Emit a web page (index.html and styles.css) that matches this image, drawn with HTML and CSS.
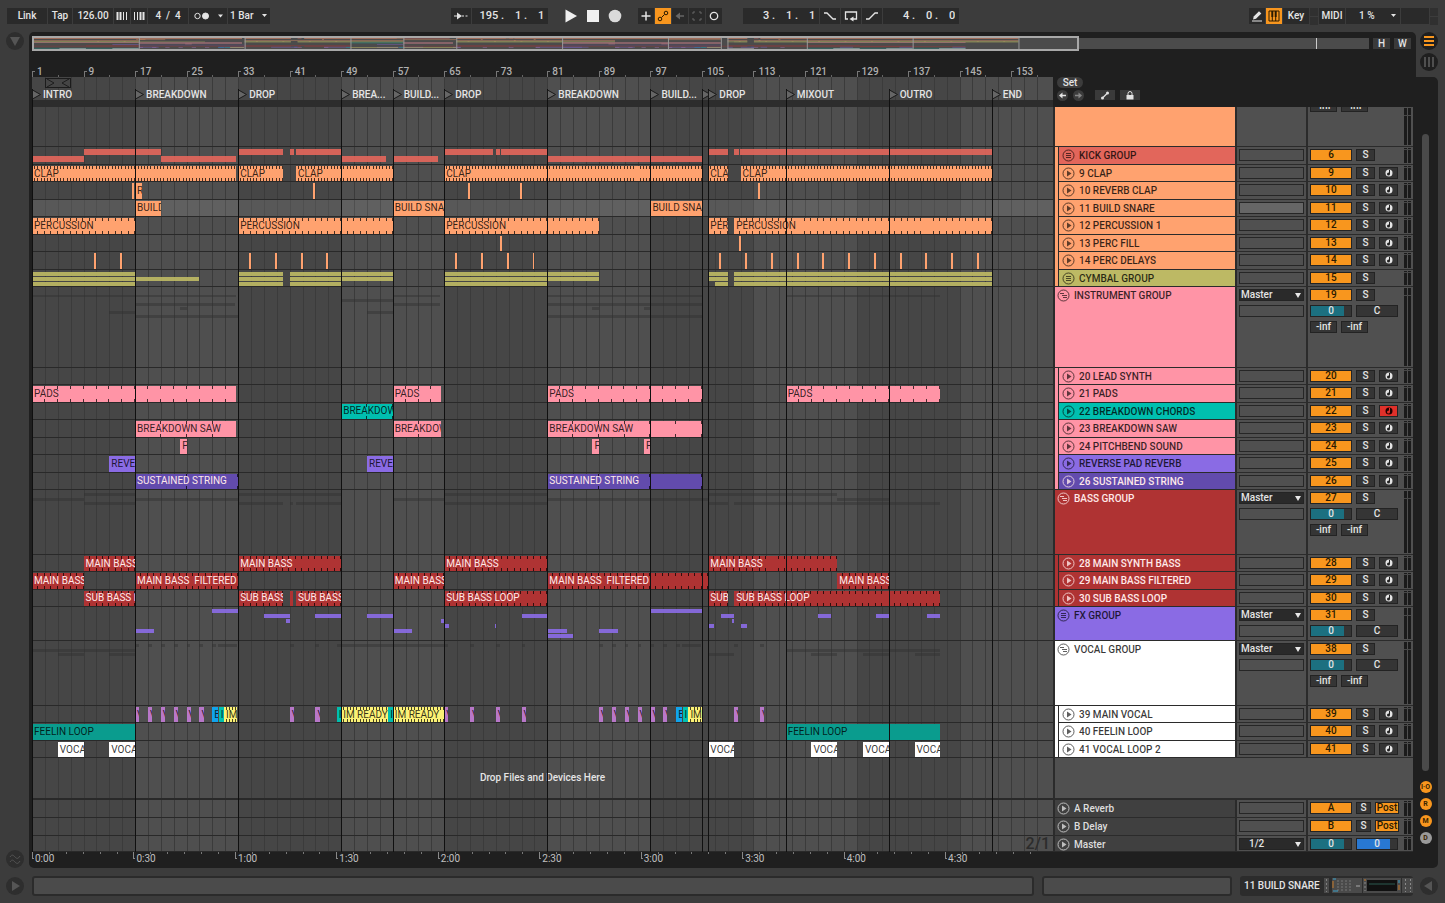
FILE: index.html
```html
<!DOCTYPE html>
<html lang="en">
<head>
<meta charset="utf-8">
<meta name="viewport" content="width=device-width, initial-scale=1">
<title>Arrangement</title>
<link rel="stylesheet" href="styles.css">
</head>
<body>
<header class="toolbar">
  <div class="tools">
    <button class="tool w40">Link</button>
    <button class="tool w24">Tap</button>
    <input class="tool w40" aria-label="Tempo" value="126.00">
    <button class="tool w16" aria-label="Nudge down"><svg width="12" height="10"><path d="M1.500 1v8M4.500 1v8" stroke-width="2"/><path d="M7.500 1v8M10.500 1v8"/></svg></button>
    <button class="tool w16" aria-label="Nudge up"><svg width="12" height="10"><path d="M1.500 1v8M4.500 1v8"/><path d="M7.500 1v8M10.500 1v8" stroke-width="2"/></svg></button>
    <input class="tool w40" aria-label="Time signature" value="4  /  4">
    <button class="tool w38" aria-label="Metronome"><svg width="30" height="10"><circle cx="4.500" cy="5" r="2.700"/><circle class="fill" cx="12.500" cy="5" r="3"/><path class="fill none" d="M25 3.500h5l-2.500 3z"/></svg></button>
    <button class="tool w42">1 Bar <svg class="caret" width="6" height="4"><path class="fill none" d="M0 0h5L2.500 3z"/></svg></button>
  </div>
  <div class="spring-a"></div>
  <div class="tools">
    <button class="tool w20" aria-label="Follow"><svg width="16" height="10"><path d="M1 5h3"/><path class="fill none" d="M4 1.500 9 5l-5 3.500z"/><path d="M9 5h6" stroke-dasharray="2 1.500"/></svg></button>
    <input class="tool w76 pos" aria-label="Position" value="195 .    1 .    1">
    <div class="transport">
      <button class="plain" aria-label="Play"><svg width="14" height="14"><path class="fill none" d="M1.500 .5v13L13 7z"/></svg></button>
      <button class="plain" aria-label="Stop"><svg width="14" height="14"><path class="fill none" d="M1 1h12v12H1z"/></svg></button>
      <button class="plain" aria-label="Record"><svg width="14" height="14"><circle class="fill none dim" cx="7" cy="7" r="6.300"/></svg></button>
    </div>
    <button class="tool w16" aria-label="Overdub"><svg width="10" height="10"><path d="M5 .5v9M.5 5h9" stroke-width="1.500"/></svg></button>
    <button class="tool w16 on" aria-label="Automation arm"><svg width="12" height="12"><circle cx="3" cy="9" r="1.800"/><circle cx="9" cy="3" r="1.800"/><path d="M4.500 7.500 7.500 4.500"/></svg></button>
    <button class="tool w16 off" aria-label="Re-enable automation"><svg width="10" height="10"><path d="M2 5h7" stroke-width="1.500"/><path class="fill none" d="M5 1.500v7L.5 5z"/></svg></button>
    <button class="tool w16 off" aria-label="Capture"><svg width="10" height="10"><path d="M1 3V1h2M7 1h2v2M9 7v2H7M3 9H1V7"/></svg></button>
    <button class="tool w16" aria-label="Session record"><svg width="10" height="10"><circle cx="5" cy="5" r="3.700" stroke-width="1.300"/></svg></button>
    <input class="tool w76 pos gap-left" aria-label="Loop start" value="3 .    1 .    1">
    <button class="tool w20" aria-label="Punch in"><svg width="14" height="10"><path d="M1 2h3l6 6h3" stroke-width="1.300"/></svg></button>
    <button class="tool w20" aria-label="Loop"><svg width="14" height="12"><path d="M4 9H1.500V2h11v7H9" stroke-width="1.300"/><path class="fill none" d="M9.500 6.500v5L5.500 9z"/></svg></button>
    <button class="tool w20" aria-label="Punch out"><svg width="14" height="10"><path d="M1 8h3l6-6h3" stroke-width="1.300"/></svg></button>
    <input class="tool w76 pos" aria-label="Loop length" value="4 .    0 .    0">
  </div>
  <div class="spring-b"></div>
  <div class="tools">
    <button class="tool w16" aria-label="Draw mode"><svg width="12" height="12"><path class="fill none" d="M2 9.500 2.700 6.500 8 1.200l2.300 2.300L5 8.800z"/><path d="M1 11h10"/></svg></button>
    <button class="tool w16 on" aria-label="Computer keyboard"><svg width="12" height="12"><path d="M1 1h10v10H1zM4.300 7v4M7.700 7v4"/><path d="M4.300 1v6M7.700 1v6" stroke-width="2"/></svg></button>
    <button class="tool w26">Key</button>
    <span class="lamps"><i></i><i></i></span>
    <button class="tool w26">MIDI</button>
    <button class="tool w54 cpu">1 % <svg class="caret" width="6" height="4"><path class="fill none" d="M0 0h5L2.500 3z"/></svg></button>
    <span class="tool w28"></span>
    <span class="lamps"><i></i><i></i></span>
  </div>
</header>

<main class="main">
  <aside class="rail">
    <button class="round" aria-label="Browser"><svg width="18" height="18"><path class="fill none" d="M4 5h10L9 14z"/></svg></button>
    <button class="round" aria-label="Groove pool"><svg width="18" height="18"><path d="M4 7c2-3 3-2 5 0s3 2 5-1M4 12c2-3 3-2 5 0s3 2 5-1"/></svg></button>
  </aside>
  <section class="panel">
    <div class="panel-top">
      <div class="top-left">
        <div class="overview">
          <div class="map" id="map"><span class="map-view"></span><span class="map-mark"></span></div>
          <button class="hw">H</button><button class="hw">W</button>
        </div>
        <div class="ruler" id="ruler"></div>
      </div>
      <div class="views">
        <button class="round dark lit" aria-label="Arrangement view"><svg width="18" height="18"><path d="M4 5h10M4 9h10M4 13h10" stroke-width="2"/></svg></button>
        <button class="round dark" aria-label="Session view"><svg width="18" height="18"><path d="M5 4v10M9 4v10M13 4v10" stroke-width="1.500"/></svg></button>
      </div>
    </div>
    <div class="panel-body">
      <div class="arrange">
        <div class="grid-layer" id="grid"></div>
        <div class="arr-head">
          <div class="arr-locs"><div class="scrub"></div></div>
          <div class="arr-set">
            <button class="set">Set</button>
            <div class="set-row">
              <button class="dot" aria-label="Previous locator"><svg width="11" height="11"><path d="M4 5.500h5" stroke-width="1.500"/><path class="fill none" d="M5.500 2.500v6L2 5.500z"/></svg></button>
              <button class="dot dimmed" aria-label="Next locator"><svg width="11" height="11"><path d="M2 5.500h5" stroke-width="1.500"/><path class="fill none" d="M5.500 2.500v6L9 5.500z"/></svg></button>
              <button class="mini first" aria-label="Automation mode"><svg width="10" height="9"><path d="M3 6.500 7 2.500" stroke-width="1.200"/><circle class="fill none" cx="2.500" cy="7" r="1.500"/><circle class="fill none" cx="7.500" cy="2" r="1.500"/></svg></button>
              <button class="mini" aria-label="Lock envelopes"><svg width="10" height="9"><path class="fill none" d="M1.500 4h7v4.500h-7z"/><path d="M3 4V2.500a2 2 0 0 1 4 0V4"/></svg></button>
            </div>
          </div>
        </div>
        <div class="tracks" id="tracks"></div>
        <div class="loc-layer" id="locs"></div>
        <div class="zoom-label">2/1</div>
      </div>
      <div class="side">
        <div class="scrollbar"></div>
        <button class="chip">I·O</button><button class="chip">R</button><button class="chip">M</button><button class="chip gray">D</button>
      </div>
    </div>
    <div class="times" id="times"></div>
  </section>
</main>

<footer class="footer">
  <button class="round" aria-label="Show detail"><svg width="18" height="18"><path class="fill none" d="M6 4v10l8-5z"/></svg></button>
  <div class="status grow"></div>
  <div class="status second"></div>
  <div class="device">
    <span>11 BUILD SNARE</span>
    <svg width="92" height="15">
      <g class="none"><path fill="#4a4a4a" d="M1 0h5v15H1zM9 0h30v15H9zM40 0h38v15H40zM79 0h12v15H79z"/>
      <path fill="#111" d="M44 2h30v11H44z"/></g>
      <path d="M3.500 1v13" stroke="#808080" stroke-dasharray="2 2"/>
      <path d="M14 3h16M14 6h16M14 9h16M14 12h16" stroke="#777" stroke-dasharray="2 2"/>
      <path d="M10 1h3M10 13h5M76 2v3" stroke="#3aa0c8"/><path d="M10 3v7M76 7v5M42 1v2" stroke="#c87a28"/>
      <path d="M33 8h4" stroke="#aaa"/><path d="M42 4v9M82.500 1v13M87.500 1v13" stroke="#8a8a8a" stroke-dasharray="2 2"/>
      <path d="M46 6h26" stroke="#2c5a50"/>
    </svg>
  </div>
  <button class="round" aria-label="Hide device"><svg width="18" height="18"><path class="fill none" d="M12 4v10L4 9z"/></svg></button>
</footer>
<script src="app.js"></script>
</body>
</html>
```
FILE: styles.css
```css
* { box-sizing: border-box; }
:root {
  --bg: #3c3c3c; --dark: #1f1f1f; --ctl: #2a2a2a; --line: #2b2b2b;
  --cell: #505050; --orange: #f8961e; --text: #e4e4e4; --head: 360px;
}
body {
  margin: 0; height: 100vh; min-height: 640px; display: flex; flex-direction: column;
  background: var(--bg); color: var(--text);
  font: 500 10px/12px Roboto, "Liberation Sans", sans-serif; overflow: hidden;
}
button, input, select { font: inherit; color: inherit; border: 0; padding: 0; margin: 0; border-radius: 0; background: none; }
svg { display: block; fill: none; stroke: currentColor; }
svg .fill { fill: currentColor; }
svg .none { stroke: none; }

/* toolbar */
.toolbar { display: flex; align-items: center; height: 32px; padding: 0 7px; flex: none; }
.tools { display: flex; gap: 1px; align-items: center; }
.spring-a { flex: 5; }
.spring-b { flex: 8; }
.tool { height: 16px; background: var(--ctl); text-align: center; display: flex; align-items: center; justify-content: center; line-height: 16px; white-space: pre; min-width: 0; }
.pos { text-align: right; padding-right: 4px; font-size: 11px; }
.tool.on { background: var(--orange); color: #2a1a00; }
.tool.off { color: #666; }
.w16 { width: 16px; } .w20 { width: 20px; } .w24 { width: 24px; } .w26 { width: 26px; } .w28 { width: 28px; }
.w38 { width: 38px; } .w40 { width: 40px; } .w42 { width: 42px; } .w54 { width: 54px; } .w76 { width: 76px; }
.caret { margin-left: 6px; }
.cpu .caret { margin-left: 14px; }
.cpu { padding-left: 10px; }
.transport { display: flex; gap: 8px; padding: 0 15px; }
.plain { color: #f0f0f0; }
.dim { opacity: .88; }
.gap-left { margin-left: 20px; }
.lamps { display: flex; flex-direction: column; gap: 1px; width: 8px; }
.lamps i { height: 8px; background: #303030; }

/* frame */
.main { flex: 1; display: flex; min-height: 0; padding-right: 7px; }
.rail { width: 29px; flex: none; display: flex; flex-direction: column; justify-content: space-between; align-items: center; }
.round { width: 18px; height: 18px; border-radius: 50%; background: #2e2e2e; color: #555; flex: none; }
.round.dark { background: var(--dark); color: #606060; }
.round.lit { color: var(--orange); }
.panel { flex: 1; min-width: 0; display: flex; flex-direction: column; }
.panel-top { display: flex; flex: none; }
.top-left { flex: 1; background: var(--dark); border-radius: 5px 5px 0 0; padding: 4px 5px 0 4px; }
.views { width: 22px; display: flex; flex-direction: column; align-items: flex-end; gap: 3px; }
.overview { display: flex; align-items: center; gap: 4px; height: 15px; }
.map { position: relative; flex: 1; height: 11px; background: #4b4b4b; }
.map svg { width: 100%; height: 11px; opacity: .7; stroke: none; }
.map-view { position: absolute; left: -1px; top: -2px; bottom: -2px; width: 78.400%; border: 2px solid #a8a8a8; }
.map-mark { position: absolute; left: 96%; top: 0; bottom: 0; width: 1px; background: #ccc; }
.hw { width: 17px; height: 11px; background: #3a3a3a; line-height: 11px; }
.ruler { position: relative; height: 26px; margin: 0 358px 0 -1px; }
.ruler span { position: absolute; bottom: 0; height: 6px; border-left: 1px solid #777; border-top: 1px solid #777; width: 3px; color: #b0b0b0; }
.ruler span b { position: absolute; left: 4px; top: -6px; font-weight: 500; }
.ruler i { position: absolute; bottom: 0; width: 1px; height: 2px; background: #666; }
.panel-body { flex: 1; min-height: 0; display: flex; background: var(--dark); padding-left: 3px; border-top-right-radius: 5px; }
.arrange { position: relative; flex: 1; min-width: 0; display: flex; flex-direction: column; }

/* timeline backdrop and locators */
.grid-layer, .loc-layer { position: absolute; inset: 0 var(--head) 0 0; overflow: hidden; pointer-events: none; }
.grid-layer { background: #4f4f4f; }
.grid-layer b { position: absolute; top: 0; bottom: 0; background: #464646; }
.grid-layer i { position: absolute; top: 0; bottom: 0; width: 1px; background: #3b3b3b; }
.loc { position: absolute; top: 12px; bottom: 0; border-left: 1px solid #101010; white-space: nowrap; }
.loc svg { position: absolute; left: -1px; top: 0; }
.loc span { padding-left: 10px; line-height: 11px; display: block; }
.brace { position: absolute; top: 1px; height: 10px; border: 1px solid #1c1c1c; color: #1c1c1c; background: #454545; display: flex; justify-content: space-between; }
.arr-head { position: relative; flex: none; display: flex; height: 30px; }
.arr-locs { flex: 1; display: flex; align-items: flex-end; }
.scrub { flex: 1; height: 7px; background: #2d2d2d; }
.arr-set { width: var(--head); background: var(--dark); padding-left: 4px; }
.set { height: 11px; width: 26px; border-radius: 6px; background: #3c3c3c; line-height: 11px; display: block; }
.set-row { display: flex; gap: 5px; align-items: center; height: 14px; }
.dot { width: 11px; height: 11px; border-radius: 50%; background: #3c3c3c; }
.dimmed { color: #888; }
.mini { width: 20px; height: 10px; background: #3a3a3a; display: flex; justify-content: center; align-items: center; }
.first { margin-left: 6px; }

/* tracks */
.tracks { position: relative; flex: 1; min-height: 0; display: flex; flex-direction: column; }
.row { display: flex; min-height: 0; flex-basis: 0; overflow: hidden; }
.lane { position: relative; flex: 1; min-width: 0; overflow: hidden; border-bottom: 1px solid #292929; }
.row.selected .lane { background: rgba(255,255,255,.1); }
.row.selected .slot { background: #666; }
.thick .lane { border-bottom-width: 2px; }
.drop { text-align: center; }
.drop .lane { display: flex; align-items: center; justify-content: center; }
.head { width: var(--head); flex: none; display: flex; border-left: 2px solid var(--line); }
.strip { width: 3px; background: var(--g); }
.strip.last { border-bottom: 1px solid var(--line); }
.name { flex: 1; display: flex; align-items: flex-start; gap: 4px; padding: 2px 0 0 2px; background: var(--c); color: rgba(0,0,0,.78); border-bottom: 1px solid var(--line); min-width: 0; line-height: 13px; white-space: nowrap; }
.child .name { border-left: 1px solid var(--line); padding-left: 3px; }
.name svg { flex: none; opacity: .8; }
.light .name, .light .clip { color: #ffe9e9; }
.ret .name { background: #404040; color: #ddd; }
.io, .mix { background: var(--cell); border-left: 2px solid var(--line); border-bottom: 1px solid var(--line); display: flex; flex-direction: column; gap: 4px; padding: 2px; overflow: hidden; }
.io { width: 71px; flex: none; }
.mix { width: 107px; flex: none; position: relative; }
.scrolled .mixline:first-child { margin-top: -41px; }
.slot { height: 12px; width: 65px; border: 1px solid #262626; flex: none; }
.route { position: relative; height: 12px; width: 65px; flex: none; }
.route select { appearance: none; width: 100%; height: 12px; background: var(--ctl); border: 1px solid #242424; padding-left: 1px; line-height: 10px; display: block; }
.route::after { content: ""; position: absolute; right: 3px; top: 4px; border: 3px solid transparent; border-top: 5px solid #e8e8e8; border-bottom: 0; pointer-events: none; }
.ret .route select { padding-left: 9px; }
.mixline { display: flex; gap: 4px; height: 12px; flex: none; }
.box { height: 12px; border: 1px solid #232323; background: #353535; line-height: 10px; text-align: center; flex: none; width: 19px; overflow: hidden; }
.act { width: 42px; background: var(--orange); color: #2a1a00; }
.vol { width: 42px; background: linear-gradient(90deg, #1c7080 83%, #353535 0); }
.cue { width: 42px; background: linear-gradient(90deg, #2878d2 83%, #353535 0); }
.pan { width: 42px; }
.inf { width: 27px; }
.arm { display: flex; align-items: center; justify-content: center; }
.armed { background: #e0302a; color: #200; }
.ret .send { width: 15px; }
.post { width: 24px; background: var(--orange); color: #2a1a00; }
.meter { position: absolute; right: 2px; top: 1px; bottom: 1px; width: 7px; border: solid #1b1b1b; border-width: 0 3px; }
.meter::before { content: ""; position: absolute; left: -3px; right: -3px; top: 1px; height: 1px; background: #484848; }
.tall .meter::before { top: 7px; }
.blank { flex: 1; background: var(--cell); border-bottom: 2px solid var(--line); }

/* clips */
.clip { position: absolute; top: 1px; bottom: 0; background-color: var(--k); color: rgba(0,0,0,.8); overflow: hidden; white-space: pre; text-indent: 2px; display: flex; align-items: center; font-weight: 400; }
.looped {
  background-image:
    repeating-linear-gradient(90deg, transparent 0 calc(var(--p) - 1px), rgba(0,0,0,.72) calc(var(--p) - 1px) var(--p)),
    repeating-linear-gradient(90deg, transparent 0 calc(var(--p) - 1px), rgba(0,0,0,.72) calc(var(--p) - 1px) var(--p));
  background-size: 100% 3px; background-position: 0 0, 0 100%; background-repeat: no-repeat;
}
.seg { position: absolute; background: var(--k); opacity: .92; }
.ghost { background: #303030; opacity: .45; }

.side { width: 25px; flex: none; display: flex; flex-direction: column; align-items: center; gap: 5px; padding: 57px 0 8px; }
.scrollbar { flex: 1; width: 7px; border-radius: 4px; background: #4a4a4a; margin-bottom: 5px; }
.chip { width: 12px; height: 12px; border-radius: 50%; background: var(--orange); color: #3a2400; font-size: 7px; line-height: 12px; font-weight: 700; flex: none; }
.gray { background: #9a9a9a; }
.zoom-label { position: absolute; right: calc(var(--head) + 3px); bottom: 1px; font-size: 16px; line-height: 15px; color: #2c2c2c; }
.times { position: relative; height: 16px; flex: none; background: var(--dark); border-radius: 0 0 5px 5px; padding-left: 3px; }
.time-scale { position: relative; height: 16px; margin-right: calc(var(--head) + 25px); overflow: hidden; }
.time-scale span { position: absolute; top: 0; height: 7px; border-left: 1px solid #888; border-bottom: 1px solid #888; width: 2px; color: #c0c0c0; }
.time-scale b { position: absolute; left: 2px; top: 1px; font-weight: 400; }
.time-scale i { position: absolute; top: 0; width: 1px; height: 2px; background: #777; }

/* footer */
.footer { height: 35px; flex: none; display: flex; align-items: center; padding: 0 7px 0 6px; }
.status { height: 20px; border: 2px solid var(--line); border-radius: 3px; background: #4b4b4b; }
.grow { flex: 1; margin-left: 8px; }
.second { width: 190px; margin: 0 8px 0 8px; }
.device { display: flex; align-items: center; gap: 3px; width: 173px; height: 20px; padding-left: 4px; border-radius: 3px; background: #2c2c2c; margin-right: 7px; white-space: nowrap; overflow: hidden; }
```
FILE: app.js
```js
const BARS = 158.5;
const MAP_BARS = 202;
const pct = (n, total = BARS) => (n / total * 100).toFixed(3) + '%';
const at = bar => pct(bar - 1);

const ORANGE = '#ffa26f', PINK = '#ff94a6', TEAL = '#00bfaf', PURPLE = '#8a6be4', DEEP = '#624bad',
  RED = '#af3333', WHITE = '#ffffff', YELLOW = '#fbf176', MAUVE = '#b877c9', BLUE = '#10a4ee', SEA = '#0a9c8e';

// Clip: [start bar, end bar, label, colour]
const named = (label, spans) => spans.map(([a, b]) => [a, b, label]);
const hits = list => list.map(a => [a, a + 0.3, '']);
const vox = list => list.map(a => [a, a + 0.65, 'V', MAUVE, 0]);
// Segments of a folded group: [top, height, [[start, end], ...]]
const dots = list => list.map(a => [a, a + 0.6]);

const cymbalTop = [[1, 17], [33, 40], [41, 57], [65, 89], [106, 109], [110, 150]];

const tracks = [
  { h: 81, c: ORANGE, kind: 'scrolled', group: 1 },
  { h: 35, c: '#e2665b', g: ORANGE, name: 'KICK GROUP', n: 6, icon: 'fold', segs: [
    [2, 6, [[9, 21], [33, 40], [41, 41.6], [42, 49], [65, 72.5], [73, 73.6], [73.8, 81], [106, 109], [110, 110.7], [110.9, 150]]],
    [9, 6, [[1, 9], [21, 32.6], [49, 56], [57, 64], [81, 105]]]] },
  { h: 35, c: ORANGE, g: ORANGE, name: '9 CLAP', n: 9, loop: 0.5, clips: named('CLAP', [[1, 32.6], [33, 40], [42, 57], [65, 105], [106, 109], [111, 150]]) },
  { h: 35, c: ORANGE, g: ORANGE, name: '10 REVERB CLAP', n: 10, clips: [...hits([16.6, 44.7, 68.7, 76.7, 113.7]), [17, 18, 'REVERB CLAP']] },
  { h: 35, c: ORANGE, g: ORANGE, name: '11 BUILD SNARE', n: 11, sel: 1, clips: named('BUILD SNARE', [[17, 21], [57, 65], [97, 105]]) },
  { h: 35, c: ORANGE, g: ORANGE, name: '12 PERCUSSION 1', n: 12, loop: 1, clips: named('PERCUSSION', [[1, 17], [33, 57], [65, 89], [106, 109], [110, 150]]) },
  { h: 35, c: ORANGE, g: ORANGE, name: '13 PERC FILL', n: 13, clips: hits([73.7, 110.7]) },
  { h: 35, c: ORANGE, g: ORANGE, name: '14 PERC DELAYS', n: 14, clips: hits([10.7, 14.7, 34.7, 38.7, 42.7, 46.7, 66.7, 70.7, 74.7, 78.7, 107.7, 111.7, 115.7, 119.7, 123.7, 127.7, 131.7, 135.7, 139.7, 143.7, 147.7]) },
  { h: 35, c: '#bdb964', g: ORANGE, name: 'CYMBAL GROUP', n: 15, icon: 'fold', last: 1, segs: [
    [2, 4, cymbalTop], [7, 4, [...cymbalTop, [17, 27]]], [12, 4, [[1, 17], [33, 40], [41, 49], [65, 81], [107, 109], [110, 150]]]] },
  { h: 162, c: PINK, group: 1, name: 'INSTRUMENT GROUP', n: 19, icon: 'open', lines: 3, ghost: [
    [8, 2, [[1, 32.6], [57, 64.4], [81, 105], [118, 142]]], [12, 3, [[49, 57]]], [16, 3, [[17, 32.5], [57, 64.4], [81, 105]]],
    [20, 3, [[24, 25], [88, 89], [96, 97]]], [24, 3, [[13, 17], [53, 57]]], [28, 3, [[17, 33], [81, 105]]]] },
  { h: 35, c: PINK, g: PINK, name: '20 LEAD SYNTH', n: 20 },
  { h: 35, c: PINK, g: PINK, name: '21 PADS', n: 21, loop: 2, clips: named('PADS', [[1, 32.6], [57, 64.5], [81, 105], [118, 142]]) },
  { h: 35, c: TEAL, g: PINK, name: '22 BREAKDOWN CHORDS', n: 22, armed: 1, loop: 4, clips: [[49, 57, 'BREAKDOWN CHORDS']] },
  { h: 35, c: PINK, g: PINK, name: '23 BREAKDOWN SAW', n: 23, loop: 4, clips: named('BREAKDOWN SAW', [[17, 32.6], [57, 64.5], [81, 105]]) },
  { h: 35, c: PINK, g: PINK, name: '24 PITCHBEND SOUND', n: 24, clips: named('PITCHBEND', [[24, 25], [88, 89], [96, 97]]) },
  { h: 35, c: PURPLE, g: PINK, name: 'REVERSE PAD REVERB', n: 25, clips: named('REVERSE PAD', [[13, 17], [53, 57]]) },
  { h: 35, c: DEEP, g: PINK, light: 1, name: '26 SUSTAINED STRING', n: 26, last: 1, loop: 8, clips: named('SUSTAINED STRING', [[17, 33], [81, 105]]) },
  { h: 130, c: RED, group: 1, light: 1, name: 'BASS GROUP', n: 27, icon: 'open', lines: 3, ghost: [
    [3, 3, [[9, 17], [33, 49], [65, 81], [106, 126]]], [8, 3, [[1, 9], [17, 33], [57, 65], [81, 106], [126, 134]]],
    [12, 3, [[9, 17], [33, 40], [41, 41.5], [42, 49], [65, 81], [106, 109], [110, 142]]]] },
  { h: 35, c: RED, g: RED, light: 1, name: '28 MAIN SYNTH BASS', n: 28, loop: 1, clips: named('MAIN BASS', [[9, 17], [33, 49], [65, 81], [106, 126]]) },
  { h: 35, c: RED, g: RED, light: 1, name: '29 MAIN BASS FILTERED', n: 29, loop: 1, clips: named('MAIN BASS  FILTERED', [[1, 9], [17, 33], [57, 65], [81, 106], [126, 134]]) },
  { h: 35, c: RED, g: RED, light: 1, name: '30 SUB BASS LOOP', n: 30, last: 1, loop: 1, clips: [...named('SUB BASS LOOP', [[9, 17], [33, 40], [42, 49], [65, 81], [106, 109], [110, 142]]), [41, 41.5, '']] },
  { h: 67, c: PURPLE, group: 1, name: 'FX GROUP', n: 31, icon: 'fold', lines: 2, segs: [
    [2, 4, [[29, 33], [97, 105]]], [7, 4, [[37, 41], [45, 49], [53, 57], [77, 81], [108, 110], [123, 125], [132, 134], [140, 142]]],
    [12, 4, [[40.5, 41], [64.5, 65], [109.6, 110]]], [17, 4, [[65, 65.7], [72.9, 73.1], [106, 106.8], [111, 112]]],
    [22, 4, [[17, 20], [57, 60], [81, 84], [89, 92]]], [27, 4, [[81, 85]]]] },
  { h: 131, c: WHITE, group: 1, name: 'VOCAL GROUP', n: 38, icon: 'open', lines: 3, ghost: [
    [3, 3, [...dots([17, 19, 21, 23, 25, 27, 29, 41, 45, 69, 73, 77, 89, 91, 93, 95, 97, 99, 101, 110, 114]), [29.9, 32.8], [48.3, 65.6], [101.9, 104.8]]],
    [8, 3, [[1, 17], [118, 142]]], [12, 3, [[5, 9], [13, 17], [106, 110], [122, 126], [130, 134], [138, 142]]]] },
  { h: 35, c: WHITE, g: WHITE, name: '39 MAIN VOCAL', n: 39, loop: 0.5, clips: [
    ...vox([17, 19, 21, 23, 25, 27, 41, 45, 65, 69, 73, 77, 89, 91, 93, 95, 97, 99, 110, 114]),
    [29, 29.9, 'E', BLUE, 0], [30, 30.8, 'I', TEAL, 0], [30.8, 32.9, 'IM READY', YELLOW],
    [48.3, 49, 'I', TEAL, 0], [49, 56.2, 'IM READY', YELLOW], [56.3, 57, 'I', TEAL, 0], [57, 65, 'IM READY', YELLOW],
    [101, 101.9, 'E', BLUE, 0], [102, 102.8, 'I', TEAL, 0], [102.9, 105, 'IM READY', YELLOW]] },
  { h: 35, c: WHITE, g: WHITE, name: '40 FEELIN LOOP', n: 40, clips: [[1, 17, 'FEELIN LOOP', SEA], [118, 142, 'FEELIN LOOP', SEA]] },
  { h: 35, c: WHITE, g: WHITE, name: '41 VOCAL LOOP 2', n: 41, last: 1, clips: named('VOCAL LOOP 2', [[5, 9], [13, 17], [106, 110], [122, 126], [130, 134], [138, 142]]) },
  { h: 84, kind: 'drop' },
  { h: 36, kind: 'ret', name: 'A Reverb', n: 'A' },
  { h: 35, kind: 'ret', name: 'B Delay', n: 'B' },
  { h: 33, kind: 'ret', name: 'Master', master: 1 }
];

const icons = {
  play: '<path class="fill none" d="M5 3.500v6L9.500 6.500z"/>',
  fold: '<path d="M4 4.500h5M4 6.500h5M4 8.500h5"/>',
  open: '<path d="M3 4.500h4M5 6.500h5M6 8.500h4"/>'
};
const icon = k => `<svg width="13" height="13"><circle cx="6.500" cy="6.500" r="5.500"/>${icons[k || 'play']}</svg>`;
const armIcon = '<svg width="8" height="8"><circle class="fill none" cx="4" cy="4" r="3.500"/><path d="M4.500 1v4" stroke="#222"/><circle cx="3.500" cy="5" r="1.500" fill="#222" stroke="none"/></svg>';
const armedIcon = armIcon.replaceAll('#222', '#e0302a');

function segHtml(list, colour, ghost) {
  return (list || []).map(([top, h, spans]) => spans.map(([a, b]) =>
    `<span class="seg${ghost ? ' ghost' : ''}" style="left:${at(a)};width:${pct(b - a)};top:${top}px;height:${h}px;--k:${colour}"></span>`).join('')).join('');
}

function clipHtml(t) {
  return (t.clips || []).map(([a, b, label, colour, noLoop]) => {
    const looped = t.loop && noLoop !== 0 && b - a > 1;
    return `<div class="clip${looped ? ' looped' : ''}" style="left:${at(a)};width:${pct(b - a)};--k:${colour || t.c};--p:${pct(t.loop || 1, b - a)}">${label}</div>`;
  }).join('');
}

function mixer(t) {
  if (t.master) return '<div class="mixline"><button class="box vol">0</button><button class="box cue">0</button></div>';
  if (t.kind === 'ret') return `<div class="mixline"><button class="box act">${t.n}</button><button class="box send">S</button><button class="box post">Post</button></div>`;
  const arm = t.icon || t.group ? '' : `<button class="box arm${t.armed ? ' armed' : ''}" aria-label="Arm">${t.armed ? armedIcon : armIcon}</button>`;
  const lines = [`<div class="mixline"><button class="box act">${t.n || 5}</button><button class="box">S</button>${arm}</div>`];
  const depth = t.kind === 'scrolled' ? 3 : t.lines || 1;
  if (depth > 1) lines.push('<div class="mixline"><button class="box vol">0</button><button class="box pan">C</button></div>');
  if (depth > 2) lines.push('<div class="mixline"><button class="box inf">-inf</button><button class="box inf">-inf</button></div>');
  return lines.join('');
}

function routing(t) {
  if (t.kind === 'scrolled') return '';
  const pick = v => `<div class="route"><select aria-label="Output"><option>${v}</option></select></div>`;
  if (t.master) return pick('1/2');
  return (t.group ? pick('Master') : '') + '<div class="slot"></div>';
}

function rowHtml(t) {
  const cls = ['row', t.kind || '', t.g ? 'child' : '', t.light ? 'light' : '', t.sel ? 'selected' : '', t.group ? 'tall' : ''].join(' ');
  const vars = `flex-grow:${t.h};--c:${t.c || '#404040'};--g:${t.g || 'none'}`;
  if (t.kind === 'drop') return `<div class="${cls} thick" style="${vars}"><div class="lane">Drop Files and Devices Here</div><div class="head"><div class="blank"></div></div></div>`;
  return `<div class="${cls}" style="${vars}">
    <div class="lane">${segHtml(t.segs, t.c)}${segHtml(t.ghost, t.c, true)}${clipHtml(t)}</div>
    <div class="head">${t.g ? `<div class="strip${t.last ? ' last' : ''}"></div>` : ''}
      <div class="name">${t.name ? icon(t.icon) + `<span>${t.name}</span>` : ''}</div>
      <div class="io">${routing(t)}</div>
      <div class="mix">${mixer(t)}<span class="meter"></span></div>
    </div></div>`;
}
document.getElementById('tracks').innerHTML = tracks.map(rowHtml).join('');

let grid = '';
for (let b = 1; b < 158; b += 32) grid += `<b style="left:${at(b)};width:${pct(16)}"></b>`;
for (let b = 3; b < 159; b += 2) grid += `<i style="left:${at(b)}"></i>`;
document.getElementById('grid').innerHTML = grid;

const locators = [[1, 'INTRO'], [17, 'BREAKDOWN'], [33, 'DROP'], [49, 'BREA...'], [57, 'BUILD...'], [65, 'DROP'], [81, 'BREAKDOWN'],
  [97, 'BUILD...'], [105, ''], [106, 'DROP'], [118, 'MIXOUT'], [134, 'OUTRO'], [150, 'END']];
document.getElementById('locs').innerHTML =
  `<div class="brace" style="left:${at(3)};width:${pct(4)}"><svg width="9" height="8"><path d="M1 0l7 4-7 4"/></svg><svg width="9" height="8"><path d="M8 0 1 4l7 4"/></svg></div>` +
  locators.map(([b, s]) => `<div class="loc" style="left:${at(b)}"><svg width="9" height="11"><path d="M.5 1v9l8-4.500z" fill="#666" stroke="#1a1a1a"/></svg><span>${s}</span></div>`).join('');

let ruler = '';
for (let b = 1; b < 158; b += 8) ruler += `<span style="left:${at(b)}"><b>${b}</b></span><i style="left:${at(b + 4)}"></i>`;
document.getElementById('ruler').innerHTML = ruler;

// 126 bpm in 4/4: five seconds last 2.625 bars
let times = '';
for (let s = 0; s < 300; s += 5) {
  const left = pct(s / 5 * 2.625);
  times += s % 30 ? `<i style="left:${left}"></i>` : `<span style="left:${left}"><b>${Math.floor(s / 60)}:${String(s % 60).padStart(2, '0')}</b></span>`;
}
document.getElementById('times').innerHTML = `<div class="time-scale">${times}</div>`;

const shown = tracks.filter(t => t.clips || t.segs);
let map = '';
shown.forEach((t, i) => {
  const spans = (t.clips || []).map(c => [c[0], c[1], c[3]]).concat(...(t.segs || []).map(s => s[2]));
  spans.forEach(([a, b, k]) => { map += `<rect x="${a - 1}" y="${i}" width="${b - a}" height="0.9" fill="${k || t.c}"/>`; });
});
locators.slice(1).forEach(([b]) => { map += `<rect x="${b - 1}" y="0" width="0.150" height="${shown.length}" fill="#bbb"/>`; });
document.getElementById('map').insertAdjacentHTML('afterbegin',
  `<svg viewBox="0 0 ${MAP_BARS} ${shown.length}" preserveAspectRatio="none">${map}</svg>`);
```
